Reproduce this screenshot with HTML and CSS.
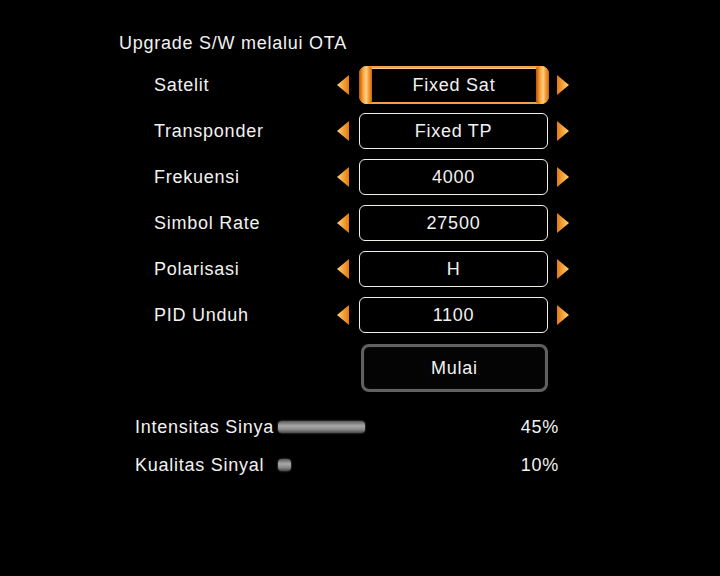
FILE: index.html
```
<!DOCTYPE html>
<html>
<head>
<meta charset="utf-8">
<link rel="stylesheet" href="styles.css">
</head>
<body>
<div class="screen">
  <div class="title">Upgrade S/W melalui OTA</div>
  <div class="menu">
    <div class="row">
      <div class="label">Satelit</div>
      <svg class="arrow" viewBox="0 0 14 22"><defs><linearGradient id="gl" x1="0" x2="1"><stop offset="0" stop-color="#ffd27a"/><stop offset="1" stop-color="#e67a0a"/></linearGradient></defs><polygon points="1,11 13,1 13,21" fill="url(#gl)"/></svg>
      <div class="box selected"><span class="br l"></span>Fixed Sat<span class="br r"></span></div>
      <svg class="arrow" viewBox="0 0 14 22"><defs><linearGradient id="gr" x1="0" x2="1"><stop offset="0" stop-color="#e67a0a"/><stop offset="1" stop-color="#ffd27a"/></linearGradient></defs><polygon points="13,11 1,1 1,21" fill="url(#gr)"/></svg>
    </div>
    <div class="row">
      <div class="label">Transponder</div>
      <svg class="arrow" viewBox="0 0 14 22"><polygon points="1,11 13,1 13,21" fill="url(#gl)"/></svg>
      <div class="box">Fixed TP</div>
      <svg class="arrow" viewBox="0 0 14 22"><polygon points="13,11 1,1 1,21" fill="url(#gr)"/></svg>
    </div>
    <div class="row">
      <div class="label">Frekuensi</div>
      <svg class="arrow" viewBox="0 0 14 22"><polygon points="1,11 13,1 13,21" fill="url(#gl)"/></svg>
      <div class="box">4000</div>
      <svg class="arrow" viewBox="0 0 14 22"><polygon points="13,11 1,1 1,21" fill="url(#gr)"/></svg>
    </div>
    <div class="row">
      <div class="label">Simbol Rate</div>
      <svg class="arrow" viewBox="0 0 14 22"><polygon points="1,11 13,1 13,21" fill="url(#gl)"/></svg>
      <div class="box">27500</div>
      <svg class="arrow" viewBox="0 0 14 22"><polygon points="13,11 1,1 1,21" fill="url(#gr)"/></svg>
    </div>
    <div class="row">
      <div class="label">Polarisasi</div>
      <svg class="arrow" viewBox="0 0 14 22"><polygon points="1,11 13,1 13,21" fill="url(#gl)"/></svg>
      <div class="box">H</div>
      <svg class="arrow" viewBox="0 0 14 22"><polygon points="13,11 1,1 1,21" fill="url(#gr)"/></svg>
    </div>
    <div class="row">
      <div class="label">PID Unduh</div>
      <svg class="arrow" viewBox="0 0 14 22"><polygon points="1,11 13,1 13,21" fill="url(#gl)"/></svg>
      <div class="box">1100</div>
      <svg class="arrow" viewBox="0 0 14 22"><polygon points="13,11 1,1 1,21" fill="url(#gr)"/></svg>
    </div>
    <div class="btnrow">
      <div class="button">Mulai</div>
    </div>
  </div>
  <div class="signal">
    <div class="srow">
      <div class="slabel">Intensitas Sinya</div>
      <div class="track"><div class="bar" style="width:87px"></div></div>
      <div class="pct">45%</div>
    </div>
    <div class="srow">
      <div class="slabel">Kualitas Sinyal</div>
      <div class="track"><div class="bar" style="width:13px"></div></div>
      <div class="pct">10%</div>
    </div>
  </div>
</div>
</body>
</html>
```
FILE: styles.css
```
html, body {
  margin: 0;
  padding: 0;
  background: #000;
}
.screen {
  width: 720px;
  height: 576px;
  background: #000;
  color: #f2f2f2;
  font-family: "Liberation Sans", Arial, sans-serif;
  font-size: 18px;
  letter-spacing: 0.75px;
  padding-top: 32px;
  box-sizing: border-box;
}
.title {
  margin-left: 119px;
  height: 22px;
  line-height: 22px;
}
.menu {
  margin-top: 8px;
  margin-left: 154px;
}
.row {
  display: flex;
  align-items: center;
  height: 46px;
}
.label {
  width: 182px;
}
.arrow {
  width: 14px;
  height: 22px;
  display: block;
}
.box {
  margin: 0 8px 0 9px;
  width: 189px;
  height: 36px;
  box-sizing: border-box;
  border: 1.5px solid #f4efe6;
  border-radius: 6px;
  display: flex;
  align-items: center;
  justify-content: center;
  position: relative;
}
.box.selected {
  height: 38px;
  width: 190px;
  margin-right: 7px;
  border: 2px solid #f3a04a;
  border-radius: 8px;
  box-shadow: inset 0 1px 0 #ffcc88;
}
.br {
  position: absolute;
  top: -2px;
  bottom: -2px;
  width: 13px;
  background: linear-gradient(90deg, #b85400, #ff9f30 30%, #ffd28a 55%, #f59a34 75%, #c86a10);
}
.br.l {
  left: -2px;
  border-radius: 8px 4px 4px 8px;
}
.br.r {
  right: -2px;
  border-radius: 4px 8px 8px 4px;
}
.btnrow {
  padding-left: 207px;
  padding-top: 6px;
}
.button {
  width: 187px;
  height: 48px;
  box-sizing: border-box;
  border: 3px solid #606060;
  border-radius: 8px;
  background: #040404;
  box-shadow: inset 0 0 2px #222;
  display: flex;
  align-items: center;
  justify-content: center;
}
.signal {
  margin-top: 16px;
  margin-left: 135px;
}
.srow {
  display: flex;
  align-items: center;
  height: 38px;
}
.slabel {
  width: 143px;
}
.track {
  width: 205px;
  height: 14px;
  display: flex;
  align-items: center;
}
.bar {
  height: 12px;
  border-radius: 4px;
  background: linear-gradient(180deg, #5a5a5a, #a8a8a8 40%, #8a8a8a 70%, #4a4a4a);
  box-shadow: 0 0 2px #777;
}
.pct {
  width: 76px;
  text-align: right;
}
```
